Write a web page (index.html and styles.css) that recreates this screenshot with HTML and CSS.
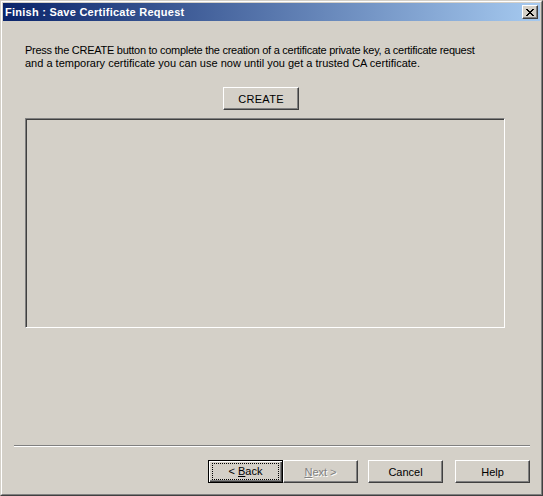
FILE: index.html
```html
<!DOCTYPE html>
<html lang="en">
<head>
    <meta charset="UTF-8">
    <title>Finish : Save Certificate Request</title>
    <link rel="stylesheet" href="styles.css">
</head>
<body>
    <div class="window">
        <div class="frame">
            <!-- Title bar -->
            <div class="titlebar">
                <span class="title">Finish : Save Certificate Request</span>
                <button class="close-btn">
                    <svg width="8" height="7" viewBox="0 0 8 7">
                        <path d="M0 0h2v1h1v1h2v-1h1v-1h2v1h-1v1h-1v1h-1v1h1v1h1v1h1v1h-2v-1h-1v-1h-2v1h-1v1h-2v-1h1v-1h1v-1h1v-1h-1v-1h-1v-1h-1z" fill="#000"/>
                    </svg>
                </button>
            </div>

            <!-- Main content -->
            <div class="content">
                <p class="intro"><span class="tight">Press the CREATE button to complete the creation of a certificate private key, a certificate request</span><br>and a temporary certificate you can use now until you get a trusted CA certificate.</p>
                <button class="btn create-btn">CREATE</button>
                <div class="output-box"></div>
            </div>

            <!-- Wizard buttons -->
            <div class="footer">
                <div class="separator"></div>
                <div class="button-row">
                    <button class="btn default-btn"><span class="focus">&lt; <u>B</u>ack</span></button>
                    <button class="btn disabled-btn"><span><u>N</u>ext &gt;</span></button>
                    <button class="btn cancel-btn">Cancel</button>
                    <button class="btn help-btn">Help</button>
                </div>
            </div>
        </div>
    </div>
</body>
</html>
```

FILE: styles.css
```css
body, html {
    margin: 0;
    padding: 0;
    background-color: #d4d0c8;
    font-family: "Liberation Sans", Arial, sans-serif;
    font-size: 11px;
}
.window {
    width: 543px;
    height: 496px;
    box-sizing: border-box;
    border: 1px solid;
    border-color: #d4d0c8 #404040 #404040 #d4d0c8;
    background: #d4d0c8;
}
.frame {
    height: 100%;
    box-sizing: border-box;
    border: 1px solid;
    border-color: #fff #808080 #808080 #fff;
    padding: 1px;
    display: flex;
    flex-direction: column;
}
.titlebar {
    height: 18px;
    flex-shrink: 0;
    display: flex;
    align-items: center;
    justify-content: space-between;
    padding: 0 2px 0 2px;
    background: linear-gradient(to right, #0a246a, #a6caf0);
}
.title {
    color: #fff;
    font-family: "Liberation Sans", Tahoma, sans-serif;
    font-weight: bold;
    font-size: 11px;
    letter-spacing: 0.25px;
}
.close-btn {
    width: 16px;
    height: 14px;
    padding: 0;
    margin: 0;
    display: flex;
    align-items: center;
    justify-content: center;
    background: #d4d0c8;
    border: 1px solid;
    border-color: #fff #404040 #404040 #fff;
    box-shadow: inset -1px -1px #808080;
}
.content {
    flex: 1;
    padding: 23px 0 0 22px;
}
.intro {
    margin: 0;
    line-height: 13px;
    color: #000;
}
.tight {
    letter-spacing: -0.27px;
}
.btn {
    width: 75px;
    height: 23px;
    padding: 0;
    margin: 0;
    font-family: "Liberation Sans", Arial, sans-serif;
    font-size: 11px;
    color: #000;
    background: #d4d0c8;
    border: 1px solid;
    border-color: #fff #404040 #404040 #fff;
    box-shadow: inset -1px -1px #808080;
    display: flex;
    align-items: center;
    justify-content: center;
}
.create-btn {
    margin: 17px 0 0 198px;
    width: 76px;
    letter-spacing: 0.3px;
}
.output-box {
    width: 480px;
    height: 210px;
    margin-top: 8px;
    box-sizing: border-box;
    border: 1px solid;
    border-color: #808080 #fff #fff #808080;
    box-shadow: inset 1px 1px #404040;
}
.footer {
    flex-shrink: 0;
}
.separator {
    height: 0;
    border-top: 1px solid #808080;
    border-bottom: 1px solid #fff;
    margin: 0 10px 13px 11px;
}
.button-row {
    display: flex;
    justify-content: flex-end;
    padding-right: 10px;
    margin-bottom: 10px;
}
.default-btn {
    border: 1px solid #000;
    box-shadow: inset 1px 1px #fff, inset -1px -1px #404040, inset -2px -2px #808080;
}
.focus {
    display: block;
    box-sizing: border-box;
    width: 67px;
    height: 17px;
    line-height: 15px;
    text-align: center;
    border: 1px dotted #000;
}
.disabled-btn {
    color: #808080;
    text-shadow: 1px 1px #fff;
}
.cancel-btn {
    margin-left: 10px;
}
.help-btn {
    margin-left: 12px;
}
```
